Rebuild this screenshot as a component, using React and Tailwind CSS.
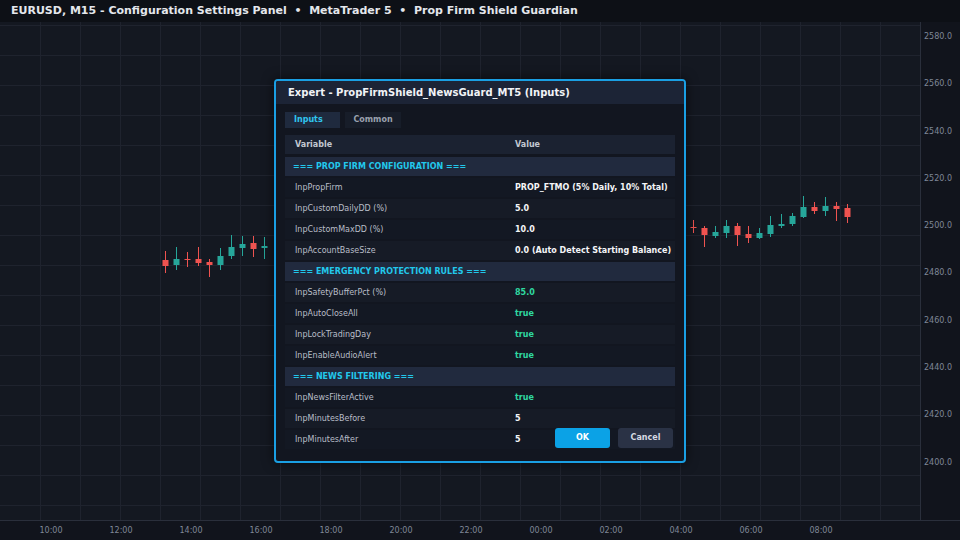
import React from 'react';

const font = { fontFamily: '"DejaVu Sans", Verdana, sans-serif' };

// [x, wickTop, wickBottom, bodyTop, bodyBottom, up]
const candles = [
   [165, 251, 273, 260, 266, false],
   [176, 247, 270, 259, 265, true],
   [187, 252, 267, 259, 260, false],
   [198, 247, 266, 259, 263, false],
   [209, 259, 277, 262, 265, false],
   [220, 248, 270, 256, 265, true],
   [231, 235, 259, 247, 256, true],
   [242, 236, 256, 244, 248, true],
   [253, 236, 257, 243, 249, false],
   [264, 237, 259, 246, 248, true],
   [693, 220, 233, 227, 228, false],
   [704, 226, 247, 228, 235, false],
   [715, 226, 238, 232, 236, true],
   [726, 220, 238, 226, 233, true],
   [737, 223, 246, 226, 235, false],
   [748, 226, 243, 234, 238, false],
   [759, 228, 239, 233, 238, true],
   [770, 216, 237, 225, 234, true],
   [781, 214, 228, 224, 226, true],
   [792, 213, 226, 216, 224, true],
   [803, 196, 218, 207, 217, true],
   [814, 202, 214, 207, 211, false],
   [825, 197, 216, 206, 211, true],
   [836, 202, 221, 206, 209, false],
   [847, 204, 223, 208, 217, false],
];

const prices = ['2580.0', '2560.0', '2540.0', '2520.0', '2500.0', '2480.0', '2460.0', '2440.0', '2420.0', '2400.0'];
const times = ['10:00', '12:00', '14:00', '16:00', '18:00', '20:00', '22:00', '00:00', '02:00', '04:00', '06:00', '08:00'];

const rows = [
   { type: 'section', label: '=== PROP FIRM CONFIGURATION ===' },
   { name: 'InpPropFirm', value: 'PROP_FTMO (5% Daily, 10% Total)' },
   { name: 'InpCustomDailyDD (%)', value: '5.0' },
   { name: 'InpCustomMaxDD (%)', value: '10.0' },
   { name: 'InpAccountBaseSize', value: '0.0 (Auto Detect Starting Balance)' },
   { type: 'section', label: '=== EMERGENCY PROTECTION RULES ===' },
   { name: 'InpSafetyBufferPct (%)', value: '85.0', green: true },
   { name: 'InpAutoCloseAll', value: 'true', green: true },
   { name: 'InpLockTradingDay', value: 'true', green: true },
   { name: 'InpEnableAudioAlert', value: 'true', green: true },
   { type: 'section', label: '=== NEWS FILTERING ===' },
   { name: 'InpNewsFilterActive', value: 'true', green: true },
   { name: 'InpMinutesBefore', value: '5' },
   { name: 'InpMinutesAfter', value: '5' },
];

function Chart() {
   const hLines = [];
   for (let y = 25; y <= 505; y += 30) hLines.push(y);
   const vLines = [];
   for (let x = 40; x < 920; x += 40) vLines.push(x);

   return (
      <svg className="absolute inset-0" width="920" height="498" viewBox="0 22 920 498">
         {hLines.map((y) => (
            <line key={'h' + y} x1="0" x2="920" y1={y + 0.5} y2={y + 0.5} stroke="#1f232e" strokeWidth="1" />
         ))}
         {vLines.map((x) => (
            <line key={'v' + x} x1={x + 0.5} x2={x + 0.5} y1="22" y2="520" stroke="#1f232e" strokeWidth="1" />
         ))}
         {candles.map(([x, wt, wb, bt, bb, up]) => {
            const c = up ? '#26a69a' : '#ef5350';
            return (
               <g key={x}>
                  <line x1={x + 0.5} x2={x + 0.5} y1={wt} y2={wb} stroke={c} strokeWidth="1" />
                  <rect x={x - 2.5} y={bt} width="6" height={Math.max(bb - bt, 1)} fill={c} />
               </g>
            );
         })}
      </svg>
   );
}

function Dialog() {
   return (
      <div className="absolute left-[274px] top-[57px] w-[412px] h-[384px] rounded-[4px] border-2 border-[#1a9fe3] bg-[#121620] overflow-hidden shadow-[0_0_12px_rgba(0,0,0,0.6)]">
         <div className="h-[23px] bg-[#1c2436] px-3 flex items-center text-[10px] font-bold text-[#f1f3f7]">
            Expert - PropFirmShield_NewsGuard_MT5 (Inputs)
         </div>
         <div className="px-[9px] pt-[8px]">
            <div className="flex gap-[5px] h-[16px]">
               <div className="w-[55px] bg-[#1f2a3e] flex items-center pl-[9px] text-[8px] font-bold text-[#2fc4ee]">Inputs</div>
               <div className="w-[56px] bg-[#171d29] flex items-center justify-center text-[8px] font-bold text-[#9aa1ae]">Common</div>
            </div>
            <div className="mt-[7px] h-[19px] bg-[#1b2231] flex items-center text-[8px] font-bold text-[#c3c8d2]">
               <div className="w-[230px] pl-[10px]">Variable</div>
               <div>Value</div>
            </div>
            <div className="mt-[3px] flex flex-col gap-[2px]">
               {rows.map((r, i) =>
                  r.type === 'section' ? (
                     <div key={i} className="h-[19px] bg-[#212a3e] flex items-center pl-[8px] text-[8px] font-bold text-[#22c8ec]">
                        {r.label}
                     </div>
                  ) : (
                     <div key={i} className={`h-[19px] flex items-center text-[8px] ${i % 2 === 0 ? 'bg-[#161b26]' : 'bg-[#131823]'}`}>
                        <div className="w-[230px] pl-[10px] text-[#b9bec8]">{r.name}</div>
                        <div className={`font-bold ${r.green ? 'text-[#2fd9a0]' : 'text-[#f4f5f7]'}`}>{r.value}</div>
                     </div>
                  )
               )}
            </div>
         </div>
         <div className="absolute right-[11px] bottom-[13px] flex gap-[8px]">
            <button className="w-[55px] h-[20px] rounded-[3px] bg-[#0ba2e6] text-[8px] font-bold text-white">OK</button>
            <button className="w-[55px] h-[20px] rounded-[3px] bg-[#2a3245] text-[8px] font-bold text-[#d6dae2]">Cancel</button>
         </div>
      </div>
   );
}

export default function App() {
   return (
      <div className="w-[960px] h-[540px] flex flex-col bg-[#141821] overflow-hidden" style={font}>
         <div className="h-[22px] bg-[#0d1016] flex items-center px-[11px] text-[11px] font-bold text-[#e4e7ec] whitespace-pre">
            EURUSD, M15 - Configuration Settings Panel  •  MetaTrader 5  •  Prop Firm Shield Guardian
         </div>
         <div className="flex-1 flex min-h-0">
            <div className="relative w-[920px] h-full">
               <Chart />
               <Dialog />
            </div>
            <div className="flex-1 border-l border-[#2a2f3b] bg-[#11141c] relative">
               <div className="flex flex-col pt-[10px] gap-[37.3px] pl-[3px]">
                  {prices.map((p) => (
                     <div key={p} className="h-[10px] leading-[10px] text-[8px] text-[#7f8797]">{p}</div>
                  ))}
               </div>
            </div>
         </div>
         <div className="h-[20px] border-t border-[#2a2f3b] bg-[#11141c] flex items-center pl-[16px]">
            {times.map((t) => (
               <div key={t} className="w-[70px] text-center text-[8px] text-[#7f8797]">{t}</div>
            ))}
         </div>
      </div>
   );
}
